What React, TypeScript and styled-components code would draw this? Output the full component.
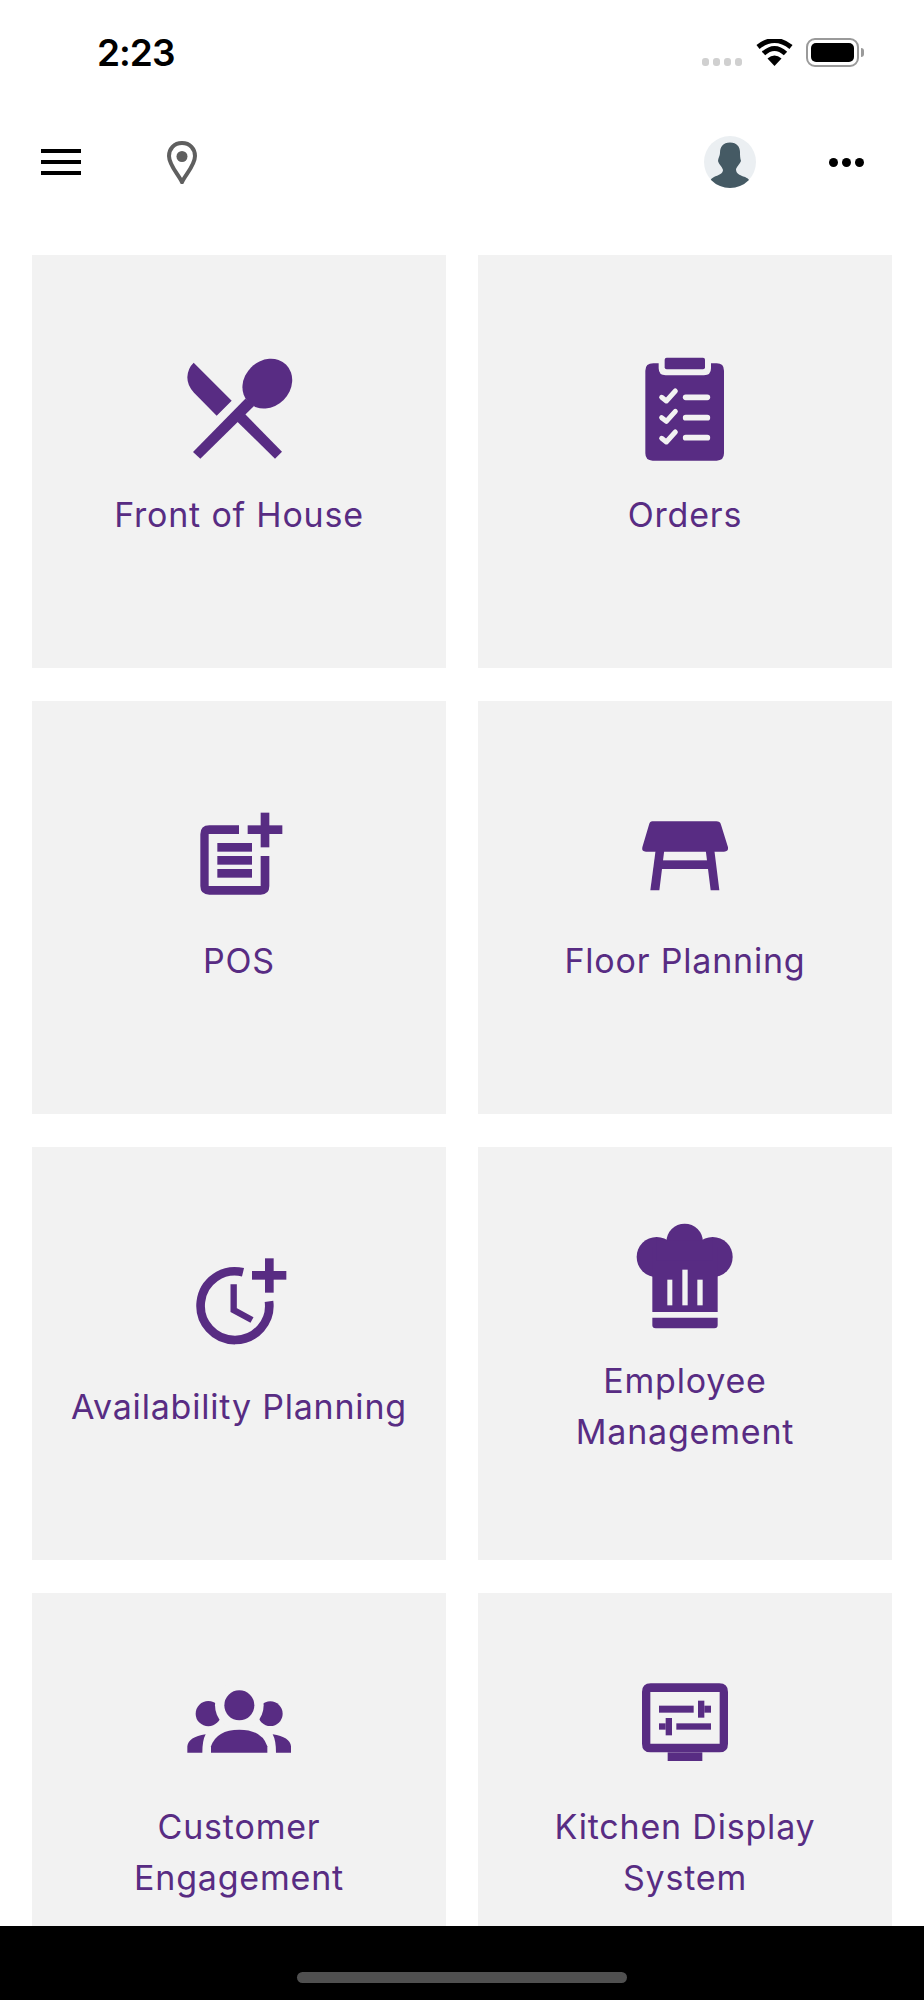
import React from "react";
import styled, { createGlobalStyle } from "styled-components";

const purple = "#582c83";
const cardBg = "#f2f2f2";

const GlobalStyle = createGlobalStyle`
  html, body {
    margin: 0;
    padding: 0;
    background: #fff;
  }
  * {
    box-sizing: border-box;
  }
`;

const Screen = styled.div`
  display: flex;
  flex-direction: column;
  width: 924px;
  height: 2000px;
  overflow: hidden;
  background: #fff;
  font-family: "Inter", "Liberation Sans", sans-serif;
`;

const StatusBar = styled.div`
  display: flex;
  flex: none;
  align-items: center;
  justify-content: space-between;
  height: 104px;
  padding: 0 59px 0 97px;
`;

const Time = styled.span`
  font-size: 37px;
  font-weight: 600;
  line-height: 1;
  letter-spacing: -1px;
  color: #000;
`;

const StatusIcons = styled.div`
  display: flex;
  align-items: flex-end;
  height: 29px;
`;

const SignalDots = styled.div`
  display: flex;
  gap: 4px;
  margin: 0 14px 1px 0;
`;

const SignalDot = styled.span`
  width: 7px;
  height: 8px;
  border-radius: 3px;
  background: #d0d0d0;
`;

const WifiIcon = styled.svg`
  display: block;
  width: 37px;
  height: 27px;
  margin: 0 13px 1px 0;
`;

const Battery = styled.div`
  position: relative;
  width: 53px;
  height: 29px;
  margin-right: 6px;
  padding: 3px;
  border: 2px solid #9a9a9a;
  border-radius: 9px;

  &::after {
    content: "";
    position: absolute;
    top: 8px;
    right: -7px;
    width: 3px;
    height: 9px;
    border-radius: 0 3px 3px 0;
    background: #9a9a9a;
  }
`;

const BatteryLevel = styled.div`
  height: 100%;
  border-radius: 5px;
  background: #000;
`;

const NavBar = styled.div`
  display: flex;
  flex: none;
  align-items: center;
  justify-content: space-between;
  height: 116px;
  padding: 0 60px 0 41px;
`;

const NavGroup = styled.div<{ $gap: number }>`
  display: flex;
  align-items: center;
  gap: ${(p) => p.$gap}px;
`;

const Hamburger = styled.div`
  display: flex;
  flex-direction: column;
  gap: 7px;
  width: 40px;
`;

const HamburgerLine = styled.span`
  height: 4px;
  background: #000;
`;

const PinIcon = styled.svg`
  display: block;
  width: 30px;
  height: 43px;
`;

const Avatar = styled.div`
  width: 52px;
  height: 52px;
  border-radius: 50%;
  overflow: hidden;
  background: #ebeff2;
`;

const MoreDots = styled.div`
  display: flex;
  gap: 4px;
`;

const MoreDot = styled.span`
  width: 9px;
  height: 9px;
  border-radius: 50%;
  background: #000;
`;

const Content = styled.div`
  flex: 1;
  min-height: 0;
  overflow: hidden;
  padding: 35px 32px 0;
`;

const Grid = styled.div`
  display: grid;
  grid-template-columns: 414px 414px;
  grid-auto-rows: 413px;
  gap: 33px 32px;
`;

const Card = styled.div`
  display: flex;
  flex-direction: column;
  align-items: center;
  justify-content: center;
  gap: 29px;
  padding-bottom: 24px;
  background: ${cardBg};
`;

const IconSvg = styled.svg`
  display: block;
  flex: none;
  width: 100px;
  height: 100px;
  overflow: visible;
  fill: ${purple};
`;

const Label = styled.div`
  max-width: 356px;
  font-size: 34px;
  font-weight: 400;
  line-height: 51px;
  letter-spacing: 0.8px;
  text-align: center;
  color: ${purple};
`;

const HomeArea = styled.div`
  display: flex;
  flex: none;
  justify-content: center;
  height: 74px;
  padding-top: 46px;
  background: #000;
`;

const HomeBar = styled.div`
  width: 330px;
  height: 11px;
  border-radius: 6px;
  background: #505050;
`;

const FrontOfHouseIcon = () => (
  <IconSvg viewBox="117 60 300 300">
    <path d="M131 68L245 182L200 227L132 158Q112 138 112 112Q113 85 131 68Z" />
    <ellipse cx="352" cy="131" rx="80" ry="69" transform="rotate(-45 352 131)" />
    <polygon points="129,336 286,176 312,198 151,356" />
    <polygon points="262,245 375,356 396,335 285,222" />
  </IconSvg>
);

const OrdersIcon = () => (
  <IconSvg viewBox="105 60 300 300">
    <rect x="194" y="53" width="121" height="35" rx="6" />
    <path d="M160 70H176V85Q176 106 197 106H312Q333 106 333 85V70H350Q372 70 372 92V340Q372 362 350 362H158Q136 362 136 340V92Q136 70 160 70Z" />
    <g fill="none" stroke={cardBg} strokeLinecap="round" strokeLinejoin="round">
      <g strokeWidth="15">
        <polyline points="185,172 199,183 226,153" />
        <polyline points="185,233 199,244 226,214" />
        <polyline points="185,295 199,306 226,276" />
      </g>
      <g strokeWidth="17">
        <line x1="257" y1="172" x2="322" y2="172" />
        <line x1="257" y1="233" x2="322" y2="233" />
        <line x1="257" y1="293" x2="322" y2="293" />
      </g>
    </g>
  </IconSvg>
);

const PosIcon = () => (
  <IconSvg viewBox="57 48 300 300">
    <rect x="272" y="68" width="26" height="104" />
    <rect x="233" y="106" width="104" height="26" />
    <path d="M207 106H118Q91 106 91 133V288Q91 314 118 314H272Q298 314 298 288V198H272V288H116V132H207Z" />
    <rect x="142" y="159" width="104" height="26" />
    <rect x="142" y="198" width="104" height="26" />
    <rect x="142" y="237" width="104" height="26" />
  </IconSvg>
);

const FloorPlanningIcon = () => (
  <IconSvg viewBox="45 18 300 300">
    <path d="M97 64H289Q300 64 303 74L324 142Q326 155 312 155H78Q64 155 67 142L87 74Q90 64 97 64Z" />
    <polygon points="107,150 133,150 118,271 91,271" />
    <polygon points="257,150 283,150 298,271 272,271" />
    <rect x="122" y="181" width="145" height="26" />
  </IconSvg>
);

const AvailabilityIcon = () => (
  <IconSvg viewBox="57 36 300 300">
    <rect x="285" y="55" width="26" height="103" />
    <rect x="246" y="93" width="103" height="26" />
    <path d="M219 97A103 103 0 1 0 297 184" fill="none" stroke={purple} strokeWidth="26" />
    <polyline points="191,133 191,210 246,240" fill="none" stroke={purple} strokeWidth="19" />
  </IconSvg>
);

const EmployeeIcon = () => (
  <IconSvg viewBox="45 47 300 300">
    <circle cx="194" cy="95" r="55" />
    <circle cx="110" cy="140" r="60" />
    <circle cx="278" cy="140" r="60" />
    <rect x="97" y="110" width="196" height="195" />
    <rect x="110" y="90" width="168" height="60" />
    <g fill={cardBg}>
      <rect x="142" y="208" width="15" height="77" />
      <rect x="187" y="178" width="16" height="107" />
      <rect x="232" y="208" width="16" height="77" />
    </g>
    <path d="M97 322H293V344Q293 354 283 354H107Q97 354 97 344Z" />
  </IconSvg>
);

const CustomerIcon = () => (
  <IconSvg viewBox="57 5 300 300">
    <circle cx="115" cy="130" r="38" />
    <circle cx="301" cy="130" r="37" />
    <circle cx="208" cy="105" r="73" fill={cardBg} />
    <circle cx="208" cy="105" r="45" />
    <path d="M123 247V228Q140 178 208 178Q275 178 292 228V247Z" />
    <path d="M52 247V228Q55 200 107 192Q97 210 97 247Z" />
    <path d="M363 247V228Q360 200 308 192Q318 210 318 247Z" />
  </IconSvg>
);

const KitchenIcon = () => (
  <IconSvg viewBox="45 5 300 300">
    <path
      fillRule="evenodd"
      d="M92 39H298Q324 39 324 65V220Q324 246 298 246H92Q66 246 66 220V65Q66 39 92 39ZM91 65V220H299V65Z"
    />
    <rect x="143" y="246" width="104" height="26" />
    <rect x="117" y="106" width="104" height="21" />
    <rect x="234" y="91" width="19" height="51" />
    <rect x="253" y="106" width="20" height="21" />
    <rect x="169" y="159" width="104" height="19" />
    <rect x="137" y="143" width="19" height="52" />
    <rect x="117" y="159" width="20" height="19" />
  </IconSvg>
);

const tiles = [
  { label: "Front of House", icon: <FrontOfHouseIcon /> },
  { label: "Orders", icon: <OrdersIcon /> },
  { label: "POS", icon: <PosIcon /> },
  { label: "Floor Planning", icon: <FloorPlanningIcon /> },
  { label: "Availability Planning", icon: <AvailabilityIcon /> },
  { label: "Employee Management", icon: <EmployeeIcon /> },
  { label: "Customer Engagement", icon: <CustomerIcon /> },
  { label: "Kitchen Display System", icon: <KitchenIcon /> },
];

const App = () => {
  return (
    <Screen>
      <GlobalStyle />
      <StatusBar>
        <Time>2:23</Time>
        <StatusIcons>
          <SignalDots>
            <SignalDot />
            <SignalDot />
            <SignalDot />
            <SignalDot />
          </SignalDots>
          <WifiIcon viewBox="0 0 37 27">
            <path d="M18.5 27L11.5 19.5Q18.5 13.5 25.5 19.5Z" />
            <path d="M7.5 14.5Q18.5 4.5 29.5 14.5" fill="none" stroke="#000" strokeWidth="5" />
            <path d="M2 8Q18.5 -5 35 8" fill="none" stroke="#000" strokeWidth="5" />
          </WifiIcon>
          <Battery>
            <BatteryLevel />
          </Battery>
        </StatusIcons>
      </StatusBar>
      <NavBar>
        <NavGroup $gap={86}>
          <Hamburger>
            <HamburgerLine />
            <HamburgerLine />
            <HamburgerLine />
          </Hamburger>
          <PinIcon viewBox="0 0 30 43">
            <path
              d="M15 2C7 2 2 8 2 15C2 24 11 33 15 41C19 33 28 24 28 15C28 8 23 2 15 2Z"
              fill="none"
              stroke="#5f5f5f"
              strokeWidth="4"
            />
            <circle cx="15" cy="15.5" r="5.5" fill="#5f5f5f" />
          </PinIcon>
        </NavGroup>
        <NavGroup $gap={73}>
          <Avatar>
            <svg viewBox="0 0 52 52" width="52" height="52">
              <path
                d="M26 6.5C19 6.5 16 11 16 17C16 20 14 22 14 25C15 29 18 30 19 34C19 38 14 39 10 41C7 42.5 6 44 6 46V52H46V46C45 42 41 41 38 40C34 38 32 37 32 33C33 30 36 28 37 25C36 22 36 19 36 16C36 11 33 6.5 26 6.5Z"
                fill="#455a64"
              />
            </svg>
          </Avatar>
          <MoreDots>
            <MoreDot />
            <MoreDot />
            <MoreDot />
          </MoreDots>
        </NavGroup>
      </NavBar>
      <Content>
        <Grid>
          {tiles.map((tile) => (
            <Card key={tile.label}>
              {tile.icon}
              <Label>{tile.label}</Label>
            </Card>
          ))}
        </Grid>
      </Content>
      <HomeArea>
        <HomeBar />
      </HomeArea>
    </Screen>
  );
};

export default App;
